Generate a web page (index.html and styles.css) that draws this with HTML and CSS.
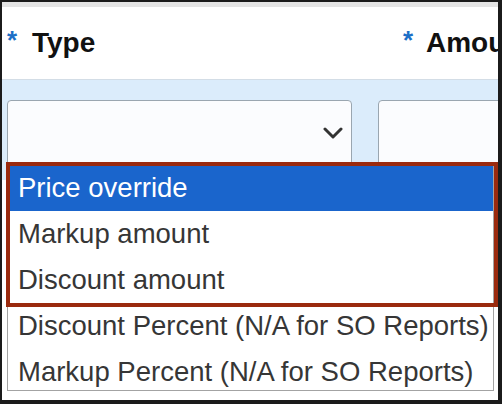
FILE: index.html
```html
<!DOCTYPE html>
<html>
<head>
<meta charset="utf-8">
<link rel="stylesheet" href="styles.css">
</head>
<body>
<div class="frame">
  <div class="topband"></div>
  <div class="header">
    <div class="label label-type"><span class="req">*</span><span>Type</span></div>
    <div class="label label-amount"><span class="req">*</span><span>Amount</span></div>
  </div>
  <div class="fields">
    <div class="select">
      <svg class="chev" width="20" height="12" viewBox="0 0 20 12"><path d="M2 2 L10 10 L18 2" fill="none" stroke="#333" stroke-width="3" stroke-linecap="round" stroke-linejoin="round"/></svg>
    </div>
    <div class="input"></div>
  </div>
  <div class="rest"></div>

  <ul class="listbox">
    <li class="opt selected">Price override</li>
    <li class="opt">Markup amount</li>
    <li class="opt">Discount amount</li>
    <li class="opt">Discount Percent (N/A for SO Reports)</li>
    <li class="opt">Markup Percent (N/A for SO Reports)</li>
  </ul>
  <div class="highlight"></div>
</div>
</body>
</html>
```

FILE: styles.css
```css
html, body {
  margin: 0;
  padding: 0;
  background: #1b1b1b;
}
.frame {
  position: relative;
  width: 502px;
  height: 404px;
  box-sizing: border-box;
  border-style: solid;
  border-color: #1b1b1b;
  border-width: 2px 4px 4px 2px;
  background: #ffffff;
  overflow: hidden;
  font-family: "Liberation Sans", Arial, sans-serif;
}
.topband {
  height: 5px;
  background: #e4e4e4;
}
.header {
  height: 72px;
  display: grid;
  grid-template-columns: 376px 1fr;
  align-items: start;
  border-bottom: 1px solid #d3dde6;
  background: #ffffff;
}
.label {
  display: flex;
  align-items: flex-start;
  font-size: 28px;
  font-weight: bold;
  color: #111;
  white-space: nowrap;
  padding-top: 20px;
  line-height: 32px;
}
.label-type {
  padding-left: 5px;
}
.label-amount {
  padding-left: 25px;
}
.req {
  color: #1c6fc6;
  font-size: 26px;
  width: 25px;
  line-height: 26px;
}
.label-amount .req {
  width: 23px;
}
.fields {
  background: #dbecfb;
  height: 100px;
  display: grid;
  grid-template-columns: 345px 1fr;
  column-gap: 26px;
  padding: 20px 0 0 5px;
  box-sizing: border-box;
}
.select, .input {
  border: 1px solid #9aa6b0;
  border-radius: 4px;
  background: #fbfcfe;
  height: 90px;
  position: relative;
}
.input {
  margin-right: -10px;
}
.chev {
  position: absolute;
  left: 315px;
  top: 26px;
}
.rest {
  background: #ffffff;
}
.listbox {
  position: absolute;
  left: 5px;
  top: 162px;
  width: 487px;
  height: 227px;
  box-sizing: border-box;
  margin: 0;
  padding: 0;
  list-style: none;
  background: #ffffff;
  border: 1px solid #a3a3a3;
  overflow: hidden;
}
.opt {
  height: 46px;
  line-height: 46px;
  font-size: 27.5px;
  padding-left: 10px;
  color: #363636;
  white-space: nowrap;
}
.opt.selected {
  background: #1a65cc;
  color: #ffffff;
}
.highlight {
  position: absolute;
  left: 4px;
  top: 160px;
  width: 492px;
  height: 145px;
  box-sizing: border-box;
  border: 4px solid #9a2a0e;
}
```
